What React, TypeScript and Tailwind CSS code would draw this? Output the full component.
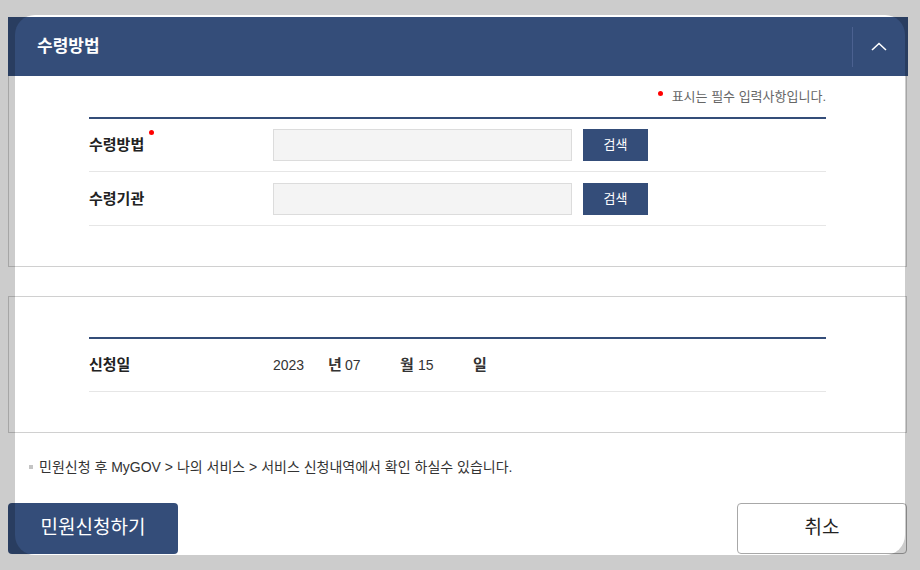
import React from "react";

// Search row inside the 수령방법 panel
function SearchRow({ label, required }: { label: string; required?: boolean }) {
  return (
    <div className="flex items-center border-b border-[#e6e6e6] py-[10px]">
      <div className="relative w-[184px] text-[15px] font-bold text-[#222]">
        <span className="relative">
          {label}
          {required && (
            <span className="absolute -right-[10px] top-[-6px] h-[5px] w-[5px] rounded-full bg-[#f00]" />
          )}
        </span>
      </div>
      <input
        type="text"
        className="h-[32px] w-[299px] border border-[#dcdcdc] bg-[#f4f4f4] px-2 text-[13px] outline-none"
      />
      <button className="ml-[11px] h-[32px] w-[65px] bg-[#344d79] text-[13px] text-white">
        검색
      </button>
    </div>
  );
}

export default function App() {
  return (
    <div className="relative h-[570px] w-[920px] overflow-hidden bg-white font-['Liberation_Sans','Noto_Sans_CJK_KR',sans-serif] text-[#333]">
      <div className="ml-2 w-[900px] pt-[17px]">
        {/* Panel header */}
        <div className="flex h-[59px] items-center justify-between bg-[#344d79]">
          <h2 className="pl-[29px] text-[17px] font-bold text-white">수령방법</h2>
          <div className="flex h-[40px] w-[56px] items-center justify-center border-l border-[#4b6190]">
            <svg width="16" height="9" viewBox="0 0 16 9" fill="none" className="mr-[3px]">
              <path d="M1 8 L8 1.5 L15 8" stroke="#fff" strokeWidth="1.6" />
            </svg>
          </div>
        </div>

        {/* Panel body */}
        <div className="w-[899px] border border-t-0 border-[#d0d0d0] px-[80px] pb-[40px] pt-[12px]">
          <div className="flex items-center justify-end text-[13px] leading-[18px] text-[#666]">
            <span className="mr-[9px] mt-[-8px] h-[5px] w-[5px] rounded-full bg-[#f00]" />
            표시는 필수 입력사항입니다.
          </div>
          <div className="mt-[11px] border-t-2 border-[#344d79]">
            <SearchRow label="수령방법" required />
            <div className="pt-px">
              <SearchRow label="수령기관" />
            </div>
          </div>
        </div>

        {/* 신청일 */}
        <div className="mt-[29px] w-[899px] border border-[#d0d0d0] px-[80px] py-[40px]">
          <div className="border-t-2 border-[#344d79]">
            <div className="flex h-[53px] items-center border-b border-[#e6e6e6] text-[13px]">
              <div className="w-[184px] text-[15px] font-bold text-[#222]">신청일</div>
              <span className="w-[55px] text-[14px]">2023</span>
              <span className="w-[17px] text-[15px] font-bold">년</span>
              <span className="w-[55px] text-[14px]">07</span>
              <span className="w-[18px] text-[15px] font-bold">월</span>
              <span className="w-[55px] text-[14px]">15</span>
              <span className="text-[15px] font-bold">일</span>
            </div>
          </div>
        </div>

        <p className="mt-[24px] flex items-center pl-[21px] text-[14px] leading-[20px] text-[#333]">
          <span className="mr-[6px] h-[4px] w-[4px] bg-[#c4c4c4]" />
          민원신청 후 MyGOV &gt; 나의 서비스 &gt; 서비스 신청내역에서 확인 하실수 있습니다.
        </p>

        <div className="mt-[26px] flex w-[899px] justify-between">
          <button className="h-[51px] w-[170px] rounded-[4px] bg-[#344d79] text-[19px] text-white">
            민원신청하기
          </button>
          <button className="h-[51px] w-[170px] rounded-[4px] border border-[#a8a8a8] bg-white text-[19px] text-[#222]">
            취소
          </button>
        </div>
      </div>

      {/* dimmed backdrop with a rounded cut-out around the dialog */}
      <div className="pointer-events-none absolute left-[15px] top-[15px] h-[540px] w-[890px] rounded-[20px] shadow-[0_0_0_2000px_rgba(0,0,0,0.2)]" />
    </div>
  );
}
